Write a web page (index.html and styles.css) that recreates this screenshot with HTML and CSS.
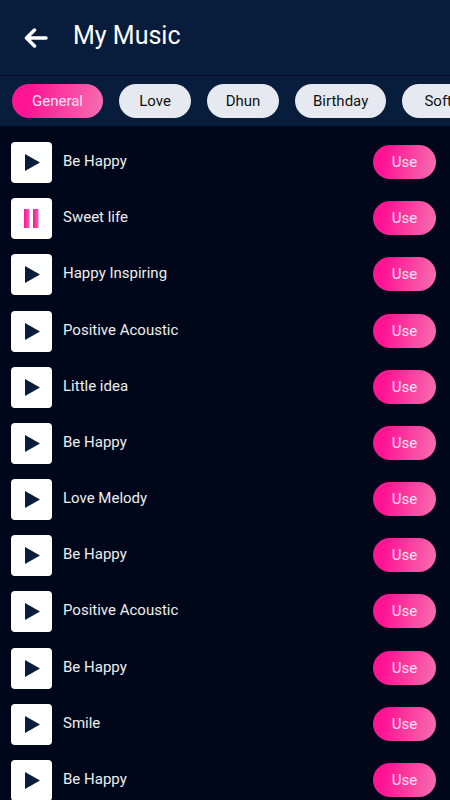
FILE: index.html
```html
<!DOCTYPE html>
<html lang="en">
<head>
    <meta charset="UTF-8">
    <meta name="viewport" content="width=device-width, initial-scale=1.0">
    <title>My Music</title>
    <link rel="stylesheet" href="styles.css">
</head>
<body>
    <svg class="defs" width="0" height="0" aria-hidden="true">
        <linearGradient id="pink" x1="0" y1="0" x2="1" y2="0">
            <stop offset="0" stop-color="#ff1493" />
            <stop offset="1" stop-color="#f35fae" />
        </linearGradient>
        <symbol id="icon-play" viewBox="0 0 41 41">
            <path d="M14 12 L29 20.5 L14 29 Z" fill="#071d3b" />
        </symbol>
        <symbol id="icon-pause" viewBox="0 0 41 41">
            <rect x="13" y="11" width="5.500" height="19" fill="url(#pink)" />
            <rect x="22" y="11" width="5.500" height="19" fill="url(#pink)" />
        </symbol>
    </svg>

    <header class="topbar">
        <button class="back" type="button" aria-label="Back">
            <svg width="24" height="20" viewBox="0 0 24 20">
                <path d="M22 10 H3 M10.500 2 L2.500 10 L10.500 18" fill="none" stroke="#fff" stroke-width="3.500" stroke-linecap="round" stroke-linejoin="round" />
            </svg>
        </button>
        <h1>My Music</h1>
    </header>

    <nav class="chips">
        <button class="chip active" type="button">General</button>
        <button class="chip" type="button">Love</button>
        <button class="chip" type="button">Dhun</button>
        <button class="chip" type="button">Birthday</button>
        <button class="chip" type="button">Soft</button>
    </nav>

    <ul class="songs">
        <li class="song">
            <button class="play" type="button" aria-label="Play"><svg><use href="#icon-play" /></svg></button>
            <span class="name">Be Happy</span>
            <button class="use" type="button">Use</button>
        </li>
        <li class="song">
            <button class="play" type="button" aria-label="Pause"><svg><use href="#icon-pause" /></svg></button>
            <span class="name">Sweet life</span>
            <button class="use" type="button">Use</button>
        </li>
        <li class="song">
            <button class="play" type="button" aria-label="Play"><svg><use href="#icon-play" /></svg></button>
            <span class="name">Happy Inspiring</span>
            <button class="use" type="button">Use</button>
        </li>
        <li class="song">
            <button class="play" type="button" aria-label="Play"><svg><use href="#icon-play" /></svg></button>
            <span class="name">Positive Acoustic</span>
            <button class="use" type="button">Use</button>
        </li>
        <li class="song">
            <button class="play" type="button" aria-label="Play"><svg><use href="#icon-play" /></svg></button>
            <span class="name">Little idea</span>
            <button class="use" type="button">Use</button>
        </li>
        <li class="song">
            <button class="play" type="button" aria-label="Play"><svg><use href="#icon-play" /></svg></button>
            <span class="name">Be Happy</span>
            <button class="use" type="button">Use</button>
        </li>
        <li class="song">
            <button class="play" type="button" aria-label="Play"><svg><use href="#icon-play" /></svg></button>
            <span class="name">Love Melody</span>
            <button class="use" type="button">Use</button>
        </li>
        <li class="song">
            <button class="play" type="button" aria-label="Play"><svg><use href="#icon-play" /></svg></button>
            <span class="name">Be Happy</span>
            <button class="use" type="button">Use</button>
        </li>
        <li class="song">
            <button class="play" type="button" aria-label="Play"><svg><use href="#icon-play" /></svg></button>
            <span class="name">Positive Acoustic</span>
            <button class="use" type="button">Use</button>
        </li>
        <li class="song">
            <button class="play" type="button" aria-label="Play"><svg><use href="#icon-play" /></svg></button>
            <span class="name">Be Happy</span>
            <button class="use" type="button">Use</button>
        </li>
        <li class="song">
            <button class="play" type="button" aria-label="Play"><svg><use href="#icon-play" /></svg></button>
            <span class="name">Smile</span>
            <button class="use" type="button">Use</button>
        </li>
        <li class="song">
            <button class="play" type="button" aria-label="Play"><svg><use href="#icon-play" /></svg></button>
            <span class="name">Be Happy</span>
            <button class="use" type="button">Use</button>
        </li>
    </ul>
</body>
</html>
```

FILE: styles.css
```css
* {
    box-sizing: border-box;
}
body {
    margin: 0;
    height: 100vh;
    display: flex;
    flex-direction: column;
    background-color: #01071b;
    font-family: Roboto, sans-serif;
}
button {
    padding: 0;
    border: none;
    font-family: inherit;
    cursor: pointer;
}
.defs {
    position: absolute;
}
.topbar {
    display: flex;
    align-items: center;
    gap: 25px;
    padding: 18px 24px 22px;
    background-color: #071d3b;
    border-bottom: 1px solid #010b1f;
}
.back {
    display: flex;
    padding-top: 4px;
    background: none;
}
.topbar h1 {
    margin: 0;
    font-size: 25px;
    font-weight: 400;
    line-height: 35px;
    color: #fff;
}
.chips {
    display: flex;
    flex: none;
    gap: 16px;
    padding: 8px 12px;
    background-color: #071d3b;
    overflow-x: auto;
    scrollbar-width: none;
}
.chip {
    flex: none;
    min-width: 72px;
    height: 34px;
    padding: 0 18px;
    border-radius: 17px;
    background-color: #e6eaf0;
    color: #111;
    font-size: 15px;
}
.chip.active {
    padding: 0 20px;
    background: linear-gradient(100deg, #ff1493 20%, #f570b0);
    color: #ffe3f3;
}
/* rows share the space under the chips, scroll when it gets short */
.songs {
    flex: 1;
    min-height: 0;
    display: grid;
    grid-auto-rows: minmax(56px, 1fr);
    margin: 0;
    padding: 0;
    list-style: none;
    overflow-y: auto;
    scrollbar-width: none;
}
.song {
    display: flex;
    align-items: flex-start;
    min-height: 0;
    padding: 16px 14px 0 11px;
}
.play {
    flex: none;
    width: 41px;
    height: 41px;
    border-radius: 4px;
    background-color: #fff;
}
.play svg {
    display: block;
    width: 41px;
    height: 41px;
}
.name {
    flex: 1;
    margin-left: 11px;
    font-size: 15px;
    line-height: 38px;
    color: #eee;
}
.use {
    width: 63px;
    height: 34px;
    margin-top: 3px;
    border-radius: 17px;
    background: linear-gradient(100deg, #ff1493 20%, #f570b0);
    color: #ffe3f3;
    font-size: 15px;
}
```
